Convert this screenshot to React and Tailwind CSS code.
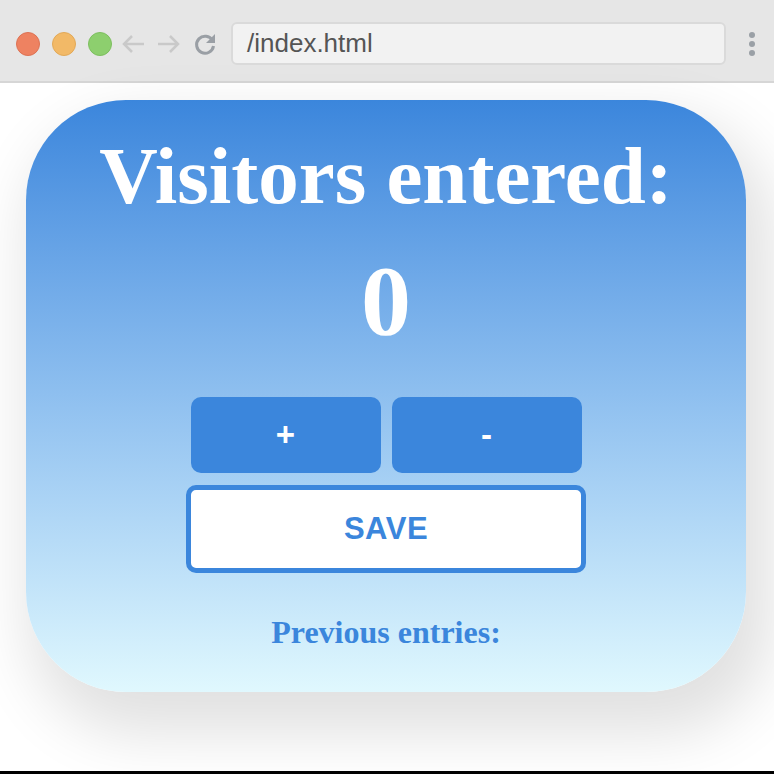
import React, { useState } from 'react';

function Reload() {
  return (
    <svg width="26" height="26" viewBox="0 0 26 26">
      <path d="M20.5 9.5 A8.5 8.5 0 1 0 21.5 15" fill="none" stroke="#9a9fa5" strokeWidth="3" />
      <path d="M23 3 L23 12 L14 12 Z" fill="#9a9fa5" />
    </svg>
  );
}

function Arrow({ dir }) {
  const d = dir === 'left' ? 'M24 13 H4 M12 5 L4 13 L12 21' : 'M2 13 H22 M14 5 L22 13 L14 21';
  return (
    <svg width="26" height="26" viewBox="0 0 26 26">
      <path d={d} fill="none" stroke="#c9c9c9" strokeWidth="2.5" />
    </svg>
  );
}

export default function App() {
  const [count, setCount] = useState(0);

  return (
    <div className="w-[774px] h-[774px] bg-white flex flex-col overflow-hidden">
      {/* Browser bar */}
      <div className="h-[83px] shrink-0 bg-[#e6e6e6] border-b-2 border-[#d6d6d6] flex items-center pt-[6px] pl-[16px] pr-[19px]">
        <div className="flex items-center gap-[12px]">
          <span className="w-[24px] h-[24px] rounded-full bg-[#ee8261] border border-[#dd7254]" />
          <span className="w-[24px] h-[24px] rounded-full bg-[#f2b967] border border-[#e2a958]" />
          <span className="w-[24px] h-[24px] rounded-full bg-[#8dcf6e] border border-[#7dbf5f]" />
        </div>
        <div className="flex items-center ml-[8px] gap-[10px]">
          <Arrow dir="left" />
          <Arrow dir="right" />
          <Reload />
        </div>
        <div className="ml-[13px] w-[495px] h-[43px] bg-[#f2f2f2] border-2 border-[#dadada] rounded-[6px] flex items-center pl-[14px]">
          <span className="text-[26px] text-[#555] font-['Liberation_Sans',sans-serif]">/index.html</span>
        </div>
        <div className="ml-auto flex flex-col gap-[3px] items-center">
          <span className="w-[6px] h-[6px] rounded-full bg-[#9aa0a6]" />
          <span className="w-[6px] h-[6px] rounded-full bg-[#9aa0a6]" />
          <span className="w-[6px] h-[6px] rounded-full bg-[#9aa0a6]" />
        </div>
      </div>

      {/* Page */}
      <div className="flex-1 pt-[17px] pl-[26px]">
        <div className="w-[720px] h-[592px] rounded-[100px] bg-gradient-to-b from-[#3b86dc] to-[#e0f8fe] shadow-[14px_30px_60px_12px_rgba(0,0,0,0.12)] flex flex-col items-center pt-[36px] font-['Liberation_Serif',serif]">
          <h1 className="text-[81px] leading-[80px] font-bold text-white">Visitors entered:</h1>
          <div className="mt-[35px] text-[100px] leading-[100px] font-bold text-white">{count}</div>
          <div className="mt-[46px] flex gap-[11px] font-['Liberation_Sans',sans-serif]">
            <button onClick={() => setCount(c => c + 1)} className="w-[190px] h-[76px] rounded-[10px] bg-[#3b86dc] text-white text-[33px] font-bold">+</button>
            <button onClick={() => setCount(c => Math.max(0, c - 1))} className="w-[190px] h-[76px] rounded-[10px] bg-[#3b86dc] text-white text-[33px] font-bold">-</button>
          </div>
          <button className="mt-[12px] w-[400px] h-[88px] rounded-[10px] border-[5px] border-[#3b86dc] bg-white text-[#3b86dc] text-[31px] tracking-[0.5px] font-bold font-['Liberation_Sans',sans-serif]">SAVE</button>
          <h2 className="mt-[43px] text-[32px] leading-[32px] font-bold text-[#3b86dc]">Previous entries:</h2>
        </div>
      </div>
      <div className="h-[3px] bg-black shrink-0" />
    </div>
  );
}
